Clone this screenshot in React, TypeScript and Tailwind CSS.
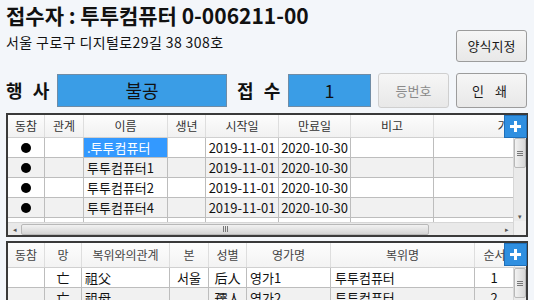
import React from "react";

const FONT = "[font-family:'Noto_Sans_CJK_KR','Noto_Sans_CJK_SC',sans-serif]";

const COLS1 = [
  { label: "동참", w: "w-[37px]" },
  { label: "관계", w: "w-[39px]" },
  { label: "이름", w: "w-[84px]" },
  { label: "생년", w: "w-[38px]" },
  { label: "시작일", w: "w-[73px]" },
  { label: "만료일", w: "w-[72px]" },
  { label: "비고", w: "w-[83px]" },
  { label: "가족", w: "w-[150px]" },
];

const ROWS1 = [
  { name: ".투투컴퓨터", start: "2019-11-01", end: "2020-10-30", selected: true },
  { name: "투투컴퓨터1", start: "2019-11-01", end: "2020-10-30" },
  { name: "투투컴퓨터2", start: "2019-11-01", end: "2020-10-30" },
  { name: "투투컴퓨터4", start: "2019-11-01", end: "2020-10-30" },
  { name: "", start: "", end: "" },
];

const COLS2 = [
  { label: "동참", w: "w-[37px]" },
  { label: "망", w: "w-[37px]" },
  { label: "복위와의관계", w: "w-[88px]" },
  { label: "본", w: "w-[39px]" },
  { label: "성별", w: "w-[38px]" },
  { label: "영가명", w: "w-[84px]" },
  { label: "복위명", w: "w-[144px]" },
  { label: "순서", w: "w-[40px]" },
];

const ROWS2 = [
  { mang: "亡", rel: "祖父", bon: "서울", sex: "后人", name: "영가1", bok: "투투컴퓨터", order: "1" },
  { mang: "亡", rel: "祖母", bon: "", sex: "孺人", name: "영가2", bok: "투투컴퓨터", order: "2" },
];

function PlusButton() {
  return (
    <div className="absolute top-0 right-[-1px] w-[23px] h-[23px] bg-[#2f8fe0] border border-[#1f6fb8] flex items-center justify-center">
      <svg width="11" height="11" viewBox="0 0 11 11">
        <rect x="4" y="0" width="3" height="11" fill="#fff" />
        <rect x="0" y="4" width="11" height="3" fill="#fff" />
      </svg>
    </div>
  );
}

function Grip({ vertical }: { vertical?: boolean }) {
  return vertical ? (
    <div className="flex flex-col gap-[1px]">
      <div className="w-[6px] h-[1px] bg-[#777]" />
      <div className="w-[6px] h-[1px] bg-[#777]" />
      <div className="w-[6px] h-[1px] bg-[#777]" />
    </div>
  ) : (
    <div className="flex gap-[1px]">
      <div className="w-[1px] h-[6px] bg-[#777]" />
      <div className="w-[1px] h-[6px] bg-[#777]" />
      <div className="w-[1px] h-[6px] bg-[#777]" />
    </div>
  );
}

function Button({ children, disabled, className }: { children: React.ReactNode; disabled?: boolean; className?: string }) {
  return (
    <button
      className={`flex items-center justify-center rounded-[3px] border text-[13px] bg-gradient-to-b from-[#f6f6f6] to-[#e8e8e8] ${
        disabled ? "border-[#cfcfcf] text-[#8a8a8a]" : "border-[#9c9c9c] text-[#1a1a1a]"
      } ${className ?? ""}`}
    >
      {children}
    </button>
  );
}

export default function App() {
  return (
    <div className={`w-[534px] h-[300px] overflow-hidden bg-[#f3f6fa] text-[#111] ${FONT}`}>
      {/* Header */}
      <div className="flex justify-between pl-[6px] pr-[7px]">
        <div className="pt-[1px]">
          <div className="text-[21px] font-bold leading-[28px]">접수자 : 투투컴퓨터 0-006211-00</div>
          <div className="text-[14px] leading-[18px] mt-[4px] tracking-[0.4px]">서울 구로구 디지털로29길 38 308호</div>
        </div>
        <Button className="mt-[30px] w-[71px] h-[32px]">양식지정</Button>
      </div>

      {/* 행사 / 접수 row */}
      <div className="flex items-center pl-[6px] mt-[11px] h-[35px]">
        <div className="w-[51px] text-[18px] font-bold tracking-[3px]">행 사</div>
        <div className="w-[170px] h-[33px] bg-[#3a9de6] border border-[#6f8ca6] flex items-center justify-center text-[18px]">
          불공
        </div>
        <div className="ml-[10px] w-[51px] text-[18px] font-bold tracking-[3px]">접 수</div>
        <div className="w-[83px] h-[33px] bg-[#3a9de6] border border-[#6f8ca6] flex items-center justify-center text-[18px]">
          1
        </div>
        <Button disabled className="ml-[7px] w-[71px] h-[35px]">등번호</Button>
        <Button className="ml-[7px] w-[71px] h-[35px] tracking-[4px]">인 쇄</Button>
      </div>

      {/* Table 1 */}
      <div className="relative mx-[6px] mt-[5px] border-2 border-[#3a3a3a] bg-white">
        <div className="flex h-[23px] overflow-hidden bg-gradient-to-b from-[#fdfdfd] to-[#f1f1f1] border-b border-[#d0d0d0]">
          {COLS1.map((c) => (
            <div
              key={c.label}
              className={`${c.w} shrink-0 flex items-center justify-center border-r border-[#dedede] text-[12px] text-[#333]`}
            >
              {c.label}
            </div>
          ))}
        </div>
        <PlusButton />
        <div className="flex">
          <div className="flex-1 min-w-0">
            <div className="h-[84px] overflow-hidden">
              {ROWS1.map((r, i) => (
                <div
                  key={i}
                  className={`flex h-[20px] border-b border-[#bdbdbd] text-[13px] ${i % 2 === 1 ? "bg-[#f1f1f1]" : "bg-white"}`}
                >
                  <div className="w-[37px] shrink-0 border-r border-[#bdbdbd] flex items-center justify-center">
                    {r.start && <div className="w-[10px] h-[10px] rounded-full bg-black" />}
                  </div>
                  <div className="w-[39px] shrink-0 border-r border-[#bdbdbd]" />
                  <div
                    className={`w-[84px] shrink-0 border-r border-[#bdbdbd] flex items-center pl-[3px] whitespace-nowrap overflow-hidden ${
                      r.selected ? "bg-[#3399ff] text-white" : ""
                    }`}
                  >
                    {r.name}
                  </div>
                  <div className="w-[38px] shrink-0 border-r border-[#bdbdbd]" />
                  <div className="w-[73px] shrink-0 border-r border-[#bdbdbd] flex items-center justify-center">{r.start}</div>
                  <div className="w-[72px] shrink-0 border-r border-[#bdbdbd] flex items-center justify-center">{r.end}</div>
                  <div className="w-[83px] shrink-0 border-r border-[#bdbdbd]" />
                  <div className="flex-1" />
                </div>
              ))}
            </div>
            {/* horizontal scrollbar */}
            <div className="h-[13px] flex items-center bg-[#e9e9e9] border-t border-[#d6d6d6]">
              <div className="w-[13px] flex items-center justify-center text-[7px] text-[#555]">◂</div>
              <div className="w-[408px] h-[11px] bg-gradient-to-b from-[#f2f2f2] to-[#d4d4d4] border border-[#b8b8b8] rounded-[2px] flex items-center justify-center">
                <Grip />
              </div>
              <div className="flex-1" />
              <div className="w-[13px] flex items-center justify-center text-[7px] text-[#555]">▸</div>
            </div>
          </div>
          {/* vertical scrollbar */}
          <div className="w-[13px] flex flex-col bg-[#eaeaea] border-l border-[#d6d6d6]">
            <div className="h-[30px] bg-gradient-to-r from-[#f2f2f2] to-[#d6d6d6] border border-[#b8b8b8] rounded-[2px] flex items-center justify-center">
              <Grip vertical />
            </div>
            <div className="flex-1" />
            <div className="h-[10px] flex items-center justify-center text-[7px] text-[#555] leading-none">▾</div>
            <div className="h-[14px] bg-[#f0f0f0]" />
          </div>
        </div>
      </div>

      {/* Table 2 */}
      <div className="relative mx-[6px] mt-[4px] border-2 border-[#3a3a3a] bg-white">
        <div className="flex h-[25px] overflow-hidden bg-gradient-to-b from-[#fdfdfd] to-[#f3f3f3] border-b border-[#d0d0d0]">
          {COLS2.map((c) => (
            <div
              key={c.label}
              className={`${c.w} shrink-0 flex items-center justify-center border-r border-[#dedede] text-[12px] text-[#444] whitespace-nowrap`}
            >
              {c.label}
            </div>
          ))}
        </div>
        <PlusButton />
        <div className="flex">
          <div className="flex-1 min-w-0">
            {ROWS2.map((r, i) => (
              <div
                key={i}
                className={`flex h-[20px] border-b border-[#bdbdbd] text-[13px] ${i % 2 === 1 ? "bg-[#f1f1f1]" : "bg-white"}`}
              >
                <div className="w-[37px] shrink-0 border-r border-[#bdbdbd]" />
                <div className="w-[37px] shrink-0 border-r border-[#bdbdbd] flex items-center justify-center">{r.mang}</div>
                <div className="w-[88px] shrink-0 border-r border-[#bdbdbd] flex items-center pl-[3px]">{r.rel}</div>
                <div className="w-[39px] shrink-0 border-r border-[#bdbdbd] flex items-center justify-center">{r.bon}</div>
                <div className="w-[38px] shrink-0 border-r border-[#bdbdbd] flex items-center justify-center">{r.sex}</div>
                <div className="w-[84px] shrink-0 border-r border-[#bdbdbd] flex items-center pl-[3px]">{r.name}</div>
                <div className="w-[144px] shrink-0 border-r border-[#bdbdbd] flex items-center pl-[4px]">{r.bok}</div>
                <div className="flex-1 flex items-center justify-center">{r.order}</div>
              </div>
            ))}
          </div>
          <div className="w-[13px] flex flex-col bg-[#eaeaea] border-l border-[#d6d6d6]">
            <div className="h-[30px] bg-gradient-to-r from-[#f2f2f2] to-[#d6d6d6] border border-[#b8b8b8] rounded-[2px] flex items-center justify-center">
              <Grip vertical />
            </div>
            <div className="flex-1" />
          </div>
        </div>
      </div>
    </div>
  );
}
